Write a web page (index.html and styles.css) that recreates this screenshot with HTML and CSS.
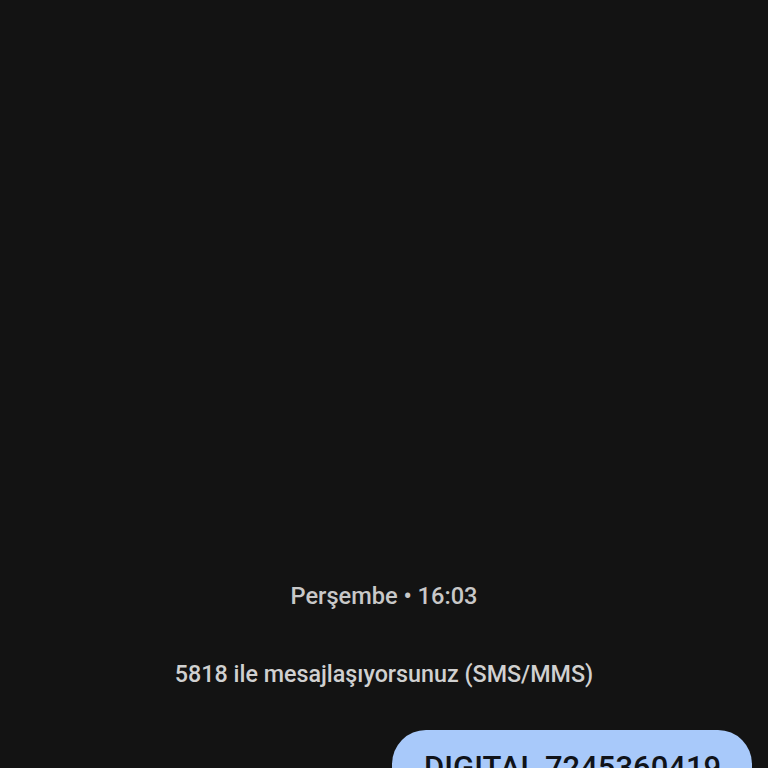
FILE: index.html
```html
<!DOCTYPE html>
<html lang="tr">
<head>
<meta charset="utf-8">
<link rel="stylesheet" href="styles.css">
</head>
<body>
<main class="thread">
  <div class="stamp">Perşembe • 16:03</div>
  <div class="info">5818 ile mesajlaşıyorsunuz (SMS/MMS)</div>
  <div class="row">
    <div class="bubble">DIGITAL 7245360419</div>
  </div>
</main>
</body>
</html>
```
FILE: styles.css
```css
html, body {
  margin: 0;
  padding: 0;
  background: #131313;
}
.thread {
  height: 768px;
  overflow: hidden;
  display: flex;
  flex-direction: column;
  font-family: Roboto, "Noto Sans", sans-serif;
  padding-top: 581px;
  box-sizing: border-box;
}
.stamp {
  text-align: center;
  color: #c8c8c8;
  font-size: 23.6px;
  font-weight: 500;
  line-height: 30px;
}
.info {
  text-align: center;
  color: #d0d0d0;
  font-size: 23.3px;
  font-weight: 500;
  line-height: 30px;
  margin-top: 48px;
}
.row {
  display: flex;
  justify-content: flex-end;
  padding-right: 16px;
  margin-top: 41px;
}
.bubble {
  background: #a8c9fa;
  color: #101319;
  border-radius: 34px;
  padding: 18px 0 20px 32px;
  font-size: 31px;
  font-weight: 500;
  line-height: 40px;
  width: 328px;
  white-space: nowrap;
}
```
